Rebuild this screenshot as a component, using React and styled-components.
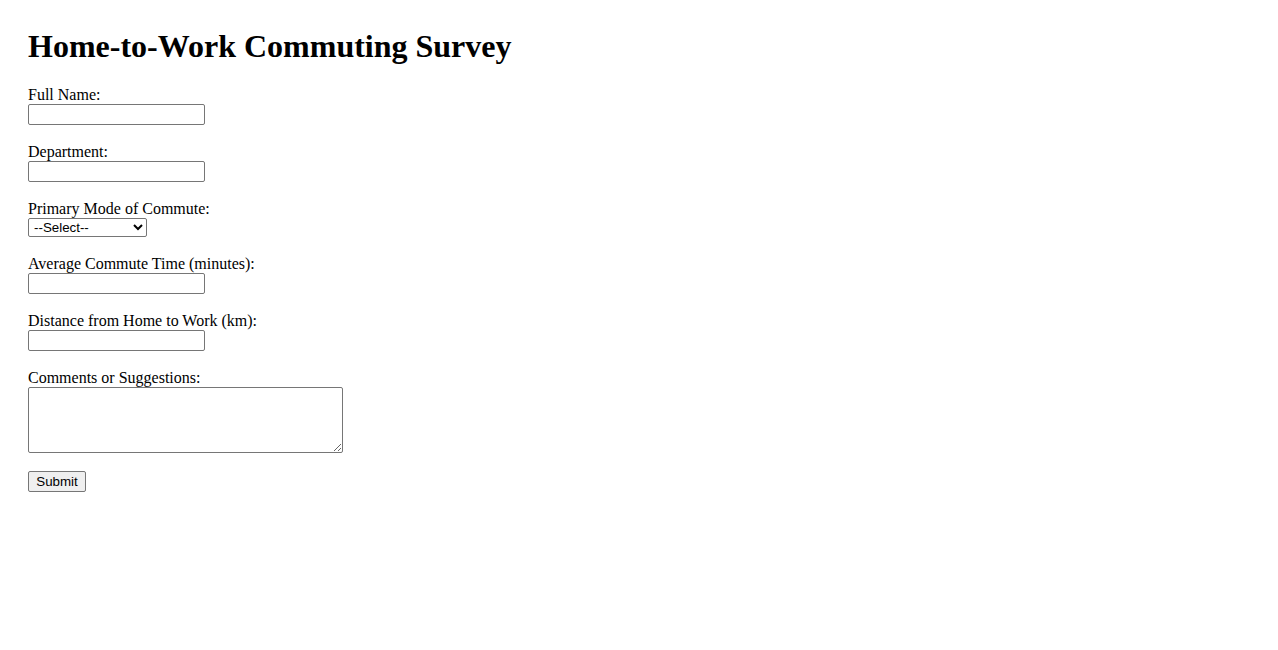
import React from 'react';
import styled, {createGlobalStyle} from 'styled-components';

const GlobalStyle = createGlobalStyle`
  html, body {
    margin: 0;
    padding: 0;
    background: #ffffff;
  }
  body {
    font-family: "Liberation Serif", "Times New Roman", serif;
    color: #000000;
  }
`;

const Page = styled.div`
  padding: 28px;
`;

const Title = styled.h1`
  font-family: "Liberation Serif", "Times New Roman", serif;
  font-size: 32px;
  font-weight: bold;
  line-height: 37px;
  margin: 0 0 21px 0;
`;

const Form = styled.form`
  display: flex;
  flex-direction: column;
  align-items: flex-start;
`;

const Field = styled.div`
  display: flex;
  flex-direction: column;
  align-items: flex-start;
  margin-bottom: ${props => props.gap || 18}px;
`;

const Label = styled.label`
  font-size: 16px;
  line-height: 18px;
`;

const TextInput = styled.input`
  box-sizing: border-box;
  width: 177px;
  height: 21px;
  padding: 1px 2px;
  border: 1px solid #767676;
  border-radius: 2px;
  font-family: "Liberation Sans", Arial, sans-serif;
  font-size: 13.33px;
  margin: 0;
`;

const Select = styled.select`
  box-sizing: border-box;
  width: 119px;
  height: 19px;
  padding: 0 0 0 1px;
  border: 1px solid #767676;
  border-radius: 2px;
  font-family: "Liberation Sans", Arial, sans-serif;
  font-size: 13.33px;
  background: #ffffff;
  color: #000000;
  margin: 0;
`;

const TextArea = styled.textarea`
  box-sizing: border-box;
  width: 315px;
  height: 66px;
  padding: 2px;
  border: 1px solid #767676;
  border-radius: 2px;
  font-family: "Liberation Mono", monospace;
  font-size: 13.33px;
  margin: 0;
`;

const Button = styled.button`
  box-sizing: border-box;
  width: 58px;
  height: 21px;
  padding: 1px 6px;
  border: 1px solid #767676;
  border-radius: 2px;
  background: #efefef;
  color: #000000;
  font-family: "Liberation Sans", Arial, sans-serif;
  font-size: 13.33px;
  margin: 0;
`;

const textFields = [
    {id: 'fullName', label: 'Full Name:'},
    {id: 'department', label: 'Department:'},
];

const numberFields = [
    {id: 'commuteTime', label: 'Average Commute Time (minutes):'},
    {id: 'distance', label: 'Distance from Home to Work (km):'},
];

export default function App() {
    return (
        <>
            <GlobalStyle/>
            <Page>
                <Title>Home-to-Work Commuting Survey</Title>
                <Form onSubmit={e => e.preventDefault()}>
                    {textFields.map(field => (
                        <Field key={field.id}>
                            <Label htmlFor={field.id}>{field.label}</Label>
                            <TextInput id={field.id} type="text"/>
                        </Field>
                    ))}
                    <Field>
                        <Label htmlFor="mode">Primary Mode of Commute:</Label>
                        <Select id="mode" defaultValue="">
                            <option value="">--Select--</option>
                            <option value="car">Car</option>
                            <option value="bus">Bus</option>
                            <option value="train">Train</option>
                            <option value="bike">Bicycle</option>
                            <option value="walk">Walking</option>
                        </Select>
                    </Field>
                    {numberFields.map(field => (
                        <Field key={field.id}>
                            <Label htmlFor={field.id}>{field.label}</Label>
                            <TextInput id={field.id} type="text"/>
                        </Field>
                    ))}
                    <Field>
                        <Label htmlFor="comments">Comments or Suggestions:</Label>
                        <TextArea id="comments"/>
                    </Field>
                    <Button type="submit">Submit</Button>
                </Form>
            </Page>
        </>
    );
}
